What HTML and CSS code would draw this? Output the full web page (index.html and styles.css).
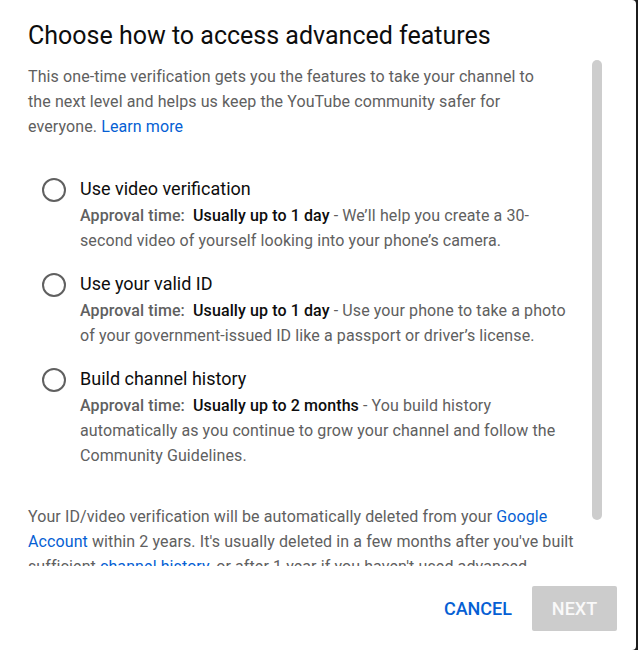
FILE: index.html
```html
<!DOCTYPE html>
<html lang="en">
<head>
<meta charset="utf-8">
<title>Choose how to access advanced features</title>
<link rel="stylesheet" href="styles.css">
</head>
<body>
<div class="dialog">
  <h1 class="title">Choose how to access advanced features</h1>
  <div class="body">
    <div class="scroll">
      <p class="intro">This one-time verification gets you the features to take your channel to the next level and helps us keep the YouTube community safer for everyone. <a href="#" class="link">Learn more</a></p>
      <div class="options">
        <label class="option">
          <span class="radio"></span>
          <span class="option-body">
            <span class="option-title">Use video verification</span>
            <span class="option-desc"><b class="label">Approval time:</b>&nbsp; <b class="time">Usually up to 1 day</b> - We’ll help you create a 30-second video of yourself looking into your phone’s camera.</span>
          </span>
        </label>
        <label class="option">
          <span class="radio"></span>
          <span class="option-body">
            <span class="option-title">Use your valid ID</span>
            <span class="option-desc"><b class="label">Approval time:</b>&nbsp; <b class="time">Usually up to 1 day</b> - Use your phone to take a photo of your government-issued ID like a passport or driver’s license.</span>
          </span>
        </label>
        <label class="option">
          <span class="radio"></span>
          <span class="option-body">
            <span class="option-title">Build channel history</span>
            <span class="option-desc"><b class="label">Approval time:</b>&nbsp; <b class="time">Usually up to 2 months</b> - You build history automatically as you continue to grow your channel and follow the Community Guidelines.</span>
          </span>
        </label>
      </div>
      <p class="note">Your ID/video verification will be automatically deleted from your <a href="#" class="link">Google Account</a> within 2 years. It's usually deleted in a few months after you've built sufficient <a href="#" class="link">channel history</a>, or after 1 year if you haven't used advanced features.</p>
    </div>
    <div class="scrollbar"><div class="thumb"></div></div>
  </div>
  <div class="actions">
    <button class="btn btn-cancel">Cancel</button>
    <button class="btn btn-next" disabled>Next</button>
  </div>
</div>
</body>
</html>
```
FILE: styles.css
```css
html, body {
  margin: 0;
  padding: 0;
}
body {
  background: #1c1c1c;
  font-family: Roboto, "Liberation Sans", Arial, sans-serif;
  width: 638px;
  height: 650px;
  overflow: hidden;
}
.dialog {
  width: 636px;
  height: 650px;
  background: #ffffff;
  border-radius: 0 4px 4px 0;
  display: flex;
  flex-direction: column;
  box-sizing: border-box;
}
.title {
  margin: 0;
  padding: 20px 28px 0;
  font-size: 25px;
  line-height: 32px;
  font-weight: 400;
  color: #0d0d0d;
}
.body {
  margin-top: 8px;
  height: 506px;
  flex: none;
  display: flex;
  padding-right: 34px;
}
.scroll {
  flex: 1;
  overflow: hidden;
  padding: 1px 16px 0 28px;
  box-sizing: border-box;
}
.scrollbar {
  flex: none;
  width: 10px;
}
.thumb {
  height: 460px;
  background: #cdcdcd;
  border-radius: 5px;
}
.intro {
  margin: 3px 0 0;
  max-width: 520px;
  font-size: 16px;
  letter-spacing: 0.1px;
  line-height: 25px;
  color: #606060;
}
.link {
  color: #065fd4;
  text-decoration: none;
}
.options {
  display: flex;
  flex-direction: column;
  gap: 17px;
  margin-top: 36px;
}
.option {
  display: flex;
  align-items: flex-start;
}
.radio {
  flex: none;
  width: 20px;
  height: 20px;
  border: 2px solid #606060;
  border-radius: 50%;
  margin: 3px 14px 0 14px;
}
.option-body {
  display: flex;
  flex-direction: column;
}
.option-title {
  font-size: 18px;
  line-height: 28px;
  color: #0d0d0d;
}
.option-desc {
  font-size: 16px;
  letter-spacing: 0.1px;
  line-height: 25px;
  color: #606060;
}
.label {
  font-weight: 500;
  color: #606060;
}
.time {
  font-weight: 500;
  color: #0d0d0d;
}
.note {
  margin: 36px 0 24px;
  font-size: 16px;
  letter-spacing: 0.1px;
  line-height: 25px;
  color: #606060;
}
.actions {
  flex: 1;
  display: flex;
  justify-content: flex-end;
  align-items: center;
  gap: 20px;
  padding: 1px 19px 0 0;
}
.btn {
  font-family: Roboto, "Liberation Sans", Arial, sans-serif;
  font-size: 18px;
  font-weight: 500;
  text-transform: uppercase;
  border: none;
  border-radius: 2px;
  height: 45px;
  cursor: pointer;
}
.btn-cancel {
  background: transparent;
  color: #065fd4;
  padding: 0;
}
.btn-next {
  background: #cccccc;
  color: #f9f9f9;
  width: 85px;
  padding: 0;
}
```
